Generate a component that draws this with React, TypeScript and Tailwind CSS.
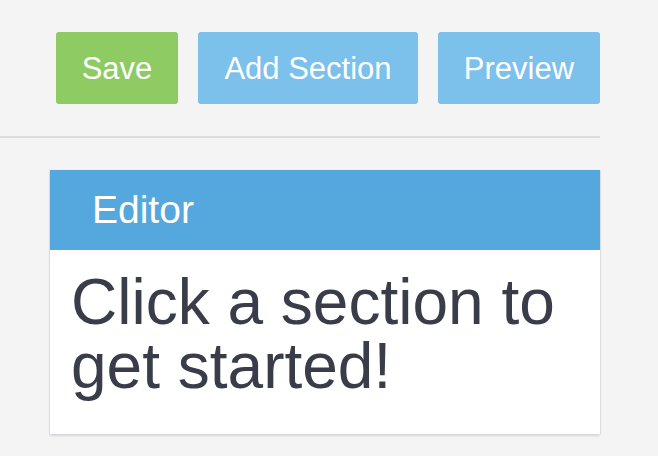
export default function App() {
  const buttons = [
    { label: "Save", className: "bg-[#8fcb63] w-[122px]" },
    { label: "Add Section", className: "bg-[#7cc0ec] w-[220px]" },
    { label: "Preview", className: "bg-[#7cc0ec] w-[162px]" },
  ];

  return (
    <div className="min-h-screen w-full bg-[#f4f4f4] font-['Liberation_Sans',Arial,sans-serif]">
      <div className="w-[600px] pt-8">
        {/* toolbar */}
        <div className="flex justify-end gap-5">
          {buttons.map((b) => (
            <button
              key={b.label}
              className={`${b.className} h-[72px] rounded-[3px] text-white text-[31px] leading-none flex items-center justify-center`}
            >
              {b.label}
            </button>
          ))}
        </div>

        <div className="mt-8 h-[2px] bg-[#dcdcdc]" />

        {/* editor card */}
        <div className="mt-8 ml-[50px] bg-white shadow-[0_2px_2px_rgba(20,20,60,0.12),1px_0_1px_rgba(20,20,60,0.06),-1px_0_1px_rgba(20,20,60,0.06)]">
          <div className="h-[80px] bg-[#55a8dd] flex items-center pl-[42px] pb-[2px]">
            <span className="text-white text-[39px] leading-none">Editor</span>
          </div>
          <div className="pl-[21px] pr-4 pt-5 pb-[36px]">
            <p className="text-[#393c49] text-[64px] leading-[64px]">
              Click a section to get started!
            </p>
          </div>
        </div>
      </div>
    </div>
  );
}
